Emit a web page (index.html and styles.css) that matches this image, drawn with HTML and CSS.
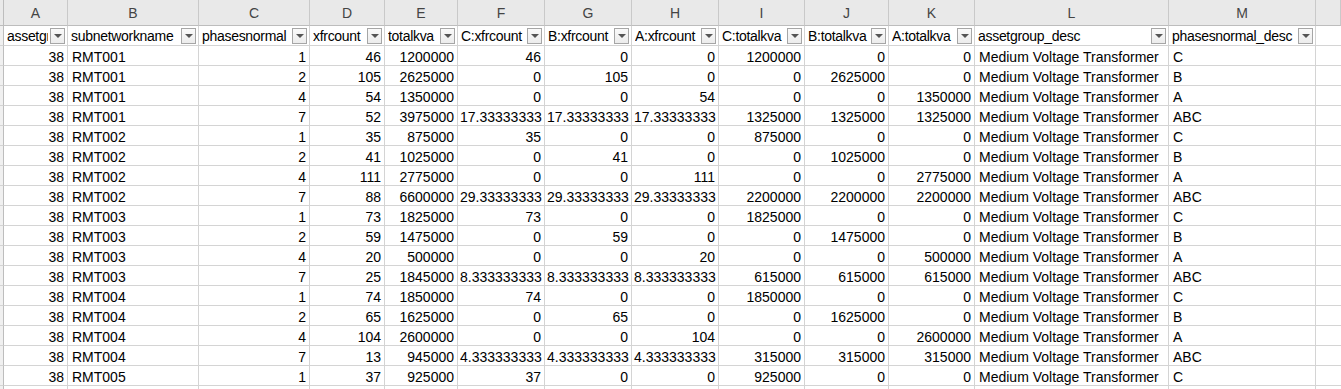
FILE: index.html
```html
<!DOCTYPE html>
<html>
<head>
<meta charset="utf-8">
<link rel="stylesheet" href="styles.css">
</head>
<body>
<div class="sheet">
  <div class="row letters">
    <div class="c rh"></div>
    <div class="c">A</div><div class="c">B</div><div class="c">C</div><div class="c">D</div><div class="c">E</div><div class="c">F</div><div class="c">G</div><div class="c">H</div><div class="c">I</div><div class="c">J</div><div class="c">K</div><div class="c">L</div><div class="c">M</div><div class="c last"></div>
  </div>
  <div class="row head">
    <div class="c rh"></div>
    <div class="c"><span class="lbl">assetgroup</span><span class="fb"></span></div>
    <div class="c"><span class="lbl">subnetworkname</span><span class="fb"></span></div>
    <div class="c"><span class="lbl">phasesnormal</span><span class="fb"></span></div>
    <div class="c"><span class="lbl">xfrcount</span><span class="fb"></span></div>
    <div class="c"><span class="lbl">totalkva</span><span class="fb"></span></div>
    <div class="c"><span class="lbl">C:xfrcount</span><span class="fb"></span></div>
    <div class="c"><span class="lbl">B:xfrcount</span><span class="fb"></span></div>
    <div class="c"><span class="lbl">A:xfrcount</span><span class="fb"></span></div>
    <div class="c"><span class="lbl">C:totalkva</span><span class="fb"></span></div>
    <div class="c"><span class="lbl">B:totalkva</span><span class="fb"></span></div>
    <div class="c"><span class="lbl">A:totalkva</span><span class="fb"></span></div>
    <div class="c"><span class="lbl">assetgroup_desc</span><span class="fb"></span></div>
    <div class="c"><span class="lbl">phasesnormal_desc</span><span class="fb"></span></div>
    <div class="c last"></div>
  </div>

  <div class="row"><div class="c rh"></div><div class="c n">38</div><div class="c">RMT001</div><div class="c n">1</div><div class="c n">46</div><div class="c n">1200000</div><div class="c n">46</div><div class="c n">0</div><div class="c n">0</div><div class="c n">1200000</div><div class="c n">0</div><div class="c n">0</div><div class="c">Medium Voltage Transformer</div><div class="c">C</div><div class="c last"></div></div>
  <div class="row"><div class="c rh"></div><div class="c n">38</div><div class="c">RMT001</div><div class="c n">2</div><div class="c n">105</div><div class="c n">2625000</div><div class="c n">0</div><div class="c n">105</div><div class="c n">0</div><div class="c n">0</div><div class="c n">2625000</div><div class="c n">0</div><div class="c">Medium Voltage Transformer</div><div class="c">B</div><div class="c last"></div></div>
  <div class="row"><div class="c rh"></div><div class="c n">38</div><div class="c">RMT001</div><div class="c n">4</div><div class="c n">54</div><div class="c n">1350000</div><div class="c n">0</div><div class="c n">0</div><div class="c n">54</div><div class="c n">0</div><div class="c n">0</div><div class="c n">1350000</div><div class="c">Medium Voltage Transformer</div><div class="c">A</div><div class="c last"></div></div>
  <div class="row"><div class="c rh"></div><div class="c n">38</div><div class="c">RMT001</div><div class="c n">7</div><div class="c n">52</div><div class="c n">3975000</div><div class="c n">17.33333333</div><div class="c n">17.33333333</div><div class="c n">17.33333333</div><div class="c n">1325000</div><div class="c n">1325000</div><div class="c n">1325000</div><div class="c">Medium Voltage Transformer</div><div class="c">ABC</div><div class="c last"></div></div>
  <div class="row"><div class="c rh"></div><div class="c n">38</div><div class="c">RMT002</div><div class="c n">1</div><div class="c n">35</div><div class="c n">875000</div><div class="c n">35</div><div class="c n">0</div><div class="c n">0</div><div class="c n">875000</div><div class="c n">0</div><div class="c n">0</div><div class="c">Medium Voltage Transformer</div><div class="c">C</div><div class="c last"></div></div>
  <div class="row"><div class="c rh"></div><div class="c n">38</div><div class="c">RMT002</div><div class="c n">2</div><div class="c n">41</div><div class="c n">1025000</div><div class="c n">0</div><div class="c n">41</div><div class="c n">0</div><div class="c n">0</div><div class="c n">1025000</div><div class="c n">0</div><div class="c">Medium Voltage Transformer</div><div class="c">B</div><div class="c last"></div></div>
  <div class="row"><div class="c rh"></div><div class="c n">38</div><div class="c">RMT002</div><div class="c n">4</div><div class="c n">111</div><div class="c n">2775000</div><div class="c n">0</div><div class="c n">0</div><div class="c n">111</div><div class="c n">0</div><div class="c n">0</div><div class="c n">2775000</div><div class="c">Medium Voltage Transformer</div><div class="c">A</div><div class="c last"></div></div>
  <div class="row"><div class="c rh"></div><div class="c n">38</div><div class="c">RMT002</div><div class="c n">7</div><div class="c n">88</div><div class="c n">6600000</div><div class="c n">29.33333333</div><div class="c n">29.33333333</div><div class="c n">29.33333333</div><div class="c n">2200000</div><div class="c n">2200000</div><div class="c n">2200000</div><div class="c">Medium Voltage Transformer</div><div class="c">ABC</div><div class="c last"></div></div>
  <div class="row"><div class="c rh"></div><div class="c n">38</div><div class="c">RMT003</div><div class="c n">1</div><div class="c n">73</div><div class="c n">1825000</div><div class="c n">73</div><div class="c n">0</div><div class="c n">0</div><div class="c n">1825000</div><div class="c n">0</div><div class="c n">0</div><div class="c">Medium Voltage Transformer</div><div class="c">C</div><div class="c last"></div></div>
  <div class="row"><div class="c rh"></div><div class="c n">38</div><div class="c">RMT003</div><div class="c n">2</div><div class="c n">59</div><div class="c n">1475000</div><div class="c n">0</div><div class="c n">59</div><div class="c n">0</div><div class="c n">0</div><div class="c n">1475000</div><div class="c n">0</div><div class="c">Medium Voltage Transformer</div><div class="c">B</div><div class="c last"></div></div>
  <div class="row"><div class="c rh"></div><div class="c n">38</div><div class="c">RMT003</div><div class="c n">4</div><div class="c n">20</div><div class="c n">500000</div><div class="c n">0</div><div class="c n">0</div><div class="c n">20</div><div class="c n">0</div><div class="c n">0</div><div class="c n">500000</div><div class="c">Medium Voltage Transformer</div><div class="c">A</div><div class="c last"></div></div>
  <div class="row"><div class="c rh"></div><div class="c n">38</div><div class="c">RMT003</div><div class="c n">7</div><div class="c n">25</div><div class="c n">1845000</div><div class="c n">8.333333333</div><div class="c n">8.333333333</div><div class="c n">8.333333333</div><div class="c n">615000</div><div class="c n">615000</div><div class="c n">615000</div><div class="c">Medium Voltage Transformer</div><div class="c">ABC</div><div class="c last"></div></div>
  <div class="row"><div class="c rh"></div><div class="c n">38</div><div class="c">RMT004</div><div class="c n">1</div><div class="c n">74</div><div class="c n">1850000</div><div class="c n">74</div><div class="c n">0</div><div class="c n">0</div><div class="c n">1850000</div><div class="c n">0</div><div class="c n">0</div><div class="c">Medium Voltage Transformer</div><div class="c">C</div><div class="c last"></div></div>
  <div class="row"><div class="c rh"></div><div class="c n">38</div><div class="c">RMT004</div><div class="c n">2</div><div class="c n">65</div><div class="c n">1625000</div><div class="c n">0</div><div class="c n">65</div><div class="c n">0</div><div class="c n">0</div><div class="c n">1625000</div><div class="c n">0</div><div class="c">Medium Voltage Transformer</div><div class="c">B</div><div class="c last"></div></div>
  <div class="row"><div class="c rh"></div><div class="c n">38</div><div class="c">RMT004</div><div class="c n">4</div><div class="c n">104</div><div class="c n">2600000</div><div class="c n">0</div><div class="c n">0</div><div class="c n">104</div><div class="c n">0</div><div class="c n">0</div><div class="c n">2600000</div><div class="c">Medium Voltage Transformer</div><div class="c">A</div><div class="c last"></div></div>
  <div class="row"><div class="c rh"></div><div class="c n">38</div><div class="c">RMT004</div><div class="c n">7</div><div class="c n">13</div><div class="c n">945000</div><div class="c n">4.333333333</div><div class="c n">4.333333333</div><div class="c n">4.333333333</div><div class="c n">315000</div><div class="c n">315000</div><div class="c n">315000</div><div class="c">Medium Voltage Transformer</div><div class="c">ABC</div><div class="c last"></div></div>
  <div class="row"><div class="c rh"></div><div class="c n">38</div><div class="c">RMT005</div><div class="c n">1</div><div class="c n">37</div><div class="c n">925000</div><div class="c n">37</div><div class="c n">0</div><div class="c n">0</div><div class="c n">925000</div><div class="c n">0</div><div class="c n">0</div><div class="c">Medium Voltage Transformer</div><div class="c">C</div><div class="c last"></div></div>
  <div class="row"><div class="c rh"></div><div class="c"></div><div class="c"></div><div class="c"></div><div class="c"></div><div class="c"></div><div class="c"></div><div class="c"></div><div class="c"></div><div class="c"></div><div class="c"></div><div class="c"></div><div class="c"></div><div class="c"></div><div class="c last"></div></div>
</div>
</body>
</html>
```

FILE: styles.css
```css
html, body {
  margin: 0;
  padding: 0;
  background: #ffffff;
  overflow: hidden;
}

.sheet {
  font-family: "Liberation Sans", Arial, sans-serif;
  font-size: 14px;
  color: #000000;
  width: 1341px;
}

.row {
  display: grid;
  grid-template-columns: 4px 64px 131px 111px 75px 73px 87px 87px 87px 86px 84px 86px 194px 147px 1fr;
  height: 20px;
}

.c {
  box-sizing: border-box;
  border-right: 1px solid #d4d4d4;
  border-bottom: 1px solid #d4d4d4;
  padding: 1px 3px 0 4px;
  line-height: 20px;
  white-space: nowrap;
  overflow: hidden;
}

.c.n {
  text-align: right;
  padding: 1px 3px 0 2px;
}

.c.rh {
  padding: 0;
  background: #f0f0f0;
  border-right: 1px solid #bdbdbd;
}

.c.last {
  border-right: none;
}

.letters {
  height: 26px;
}

.letters .c {
  background: #e9e9e9;
  color: #444444;
  text-align: center;
  line-height: 27px;
  padding: 0;
  border-right: 1px solid #c9c9c9;
  border-bottom: 1px solid #bdbdbd;
}

.letters .c.rh {
  border-right: 1px solid #bdbdbd;
}

.head .c {
  display: flex;
  align-items: center;
  padding: 1px 2px 0 3px;
  gap: 2px;
}

.head .c.rh,
.head .c.last {
  padding: 0;
}

.lbl {
  flex: 1;
  min-width: 0;
  overflow: hidden;
  white-space: nowrap;
  line-height: 19px;
  letter-spacing: -0.3px;
}

.fb {
  flex: none;
  width: 15px;
  height: 16px;
  margin-top: -1px;
  box-sizing: border-box;
  border: 1px solid #a6a6a6;
  background: linear-gradient(#fafafa, #ececec);
  display: flex;
  align-items: center;
  justify-content: center;
}

.fb::after {
  content: "";
  width: 0;
  height: 0;
  border-left: 4px solid transparent;
  border-right: 4px solid transparent;
  border-top: 4px solid #555555;
}
```
